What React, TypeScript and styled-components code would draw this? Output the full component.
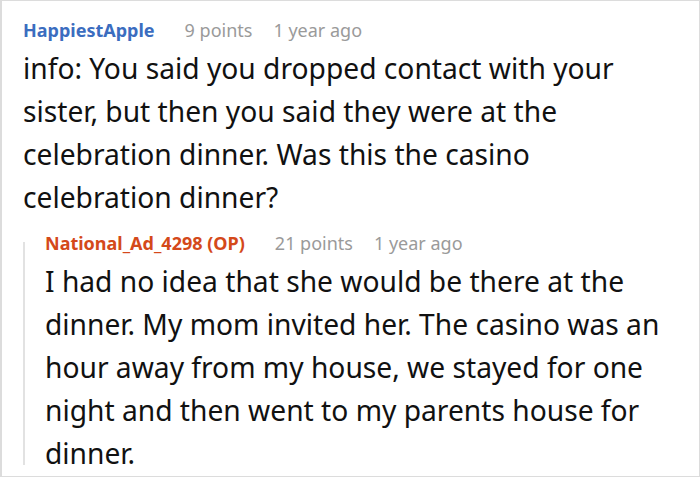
import React from 'react';
import styled, { createGlobalStyle } from 'styled-components';

const GlobalStyle = createGlobalStyle`
  html, body {
    margin: 0;
    padding: 0;
    background: #ffffff;
  }
  body {
    font-family: "Noto Sans", "DejaVu Sans", sans-serif;
  }
`;

interface CommentData {
  author: string;
  op?: boolean;
  points: number;
  age: string;
  body: string;
}

const parent: CommentData = {
  author: 'HappiestApple',
  points: 9,
  age: '1 year ago',
  body: 'info: You said you dropped contact with your sister, but then you said they were at the celebration dinner. Was this the casino celebration dinner?',
};

const reply: CommentData = {
  author: 'National_Ad_4298',
  op: true,
  points: 21,
  age: '1 year ago',
  body: 'I had no idea that she would be there at the dinner. My mom invited her. The casino was an hour away from my house, we stayed for one night and then went to my parents house for dinner.',
};

const Comment: React.FC<{ data: CommentData }> = ({ data }) => (
  <CommentBlock>
    <Meta>
      <Author $op={data.op}>
        {data.author}
        {data.op ? ' (OP)' : ''}
      </Author>
      <Points>{data.points} points</Points>
      <Age>{data.age}</Age>
    </Meta>
    <Body>{data.body}</Body>
  </CommentBlock>
);

export default function App() {
  return (
    <>
      <GlobalStyle />
      <Frame>
        <Comment data={parent} />
        <Thread>
          <ThreadLine />
          <Comment data={reply} />
        </Thread>
      </Frame>
    </>
  );
}

const Frame = styled.div`
  box-sizing: border-box;
  width: 700px;
  height: 477px;
  border: 1px solid #dcdcdc;
  border-left-width: 2px;
  padding: 17px 20px 0 21px;
  overflow: hidden;
  background: #ffffff;
`;

const CommentBlock = styled.div`
  display: flex;
  flex-direction: column;
  min-width: 0;
`;

const Meta = styled.div`
  display: flex;
  align-items: baseline;
  height: 24px;
  line-height: 24px;
  font-size: 18px;
  margin-bottom: 5px;
  white-space: nowrap;
`;

const Author = styled.span<{ $op?: boolean }>`
  font-weight: 700;
  color: ${({ $op }) => ($op ? '#d4491a' : '#3b6dbf')};
  margin-right: 30px;
`;

const Points = styled.span`
  color: #9a9a9a;
  margin-right: 21px;
`;

const Age = styled.span`
  color: #9a9a9a;
`;

const Body = styled.div`
  font-size: 28.2px;
  line-height: 43px;
  color: #111111;
`;

const Thread = styled.div`
  display: flex;
  margin-top: 12px;
`;

const ThreadLine = styled.div`
  flex: 0 0 2px;
  background: #e2e2e2;
  margin: 11px 20px 10px 0;
`;
